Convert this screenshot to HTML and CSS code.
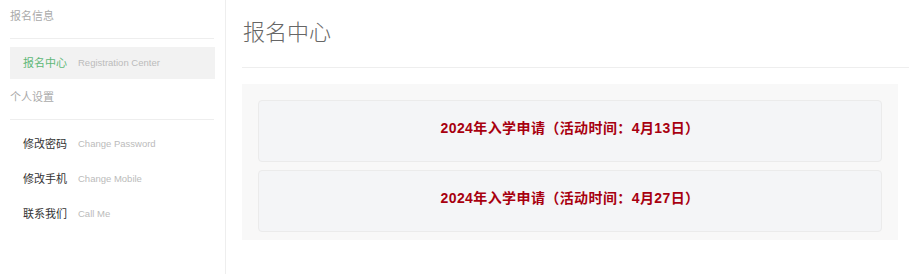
FILE: index.html
```html
<!DOCTYPE html>
<html lang="zh-CN">
<head>
<meta charset="utf-8">
<title>报名中心</title>
<link rel="stylesheet" href="styles.css">
</head>
<body>
<div class="layout">
  <aside class="sidebar">
    <div class="nav-head">报名信息</div>
    <ul class="nav-list">
      <li class="nav-item active"><span class="cn">报名中心</span><span class="en">Registration Center</span></li>
    </ul>
    <div class="nav-head second">个人设置</div>
    <ul class="nav-list">
      <li class="nav-item"><span class="cn">修改密码</span><span class="en">Change Password</span></li>
      <li class="nav-item"><span class="cn">修改手机</span><span class="en">Change Mobile</span></li>
      <li class="nav-item"><span class="cn">联系我们</span><span class="en">Call Me</span></li>
    </ul>
  </aside>
  <main class="main">
    <h1 class="page-title">报名中心</h1>
    <section class="panel">
      <div class="card">2024年入学申请（活动时间：4月13日）</div>
      <div class="card">2024年入学申请（活动时间：4月27日）</div>
    </section>
  </main>
</div>
</body>
</html>
```

FILE: styles.css
```css
* { box-sizing: border-box; }
html, body {
  margin: 0;
  padding: 0;
  background: #fff;
  font-family: "Liberation Sans", "Noto Sans CJK SC", sans-serif;
}
.layout {
  display: flex;
  min-height: 274px;
}
.sidebar {
  width: 226px;
  flex: none;
  padding: 0 10px;
  border-right: 1px solid #eeeeee;
}
.nav-head {
  font-size: 11px;
  color: #aaaaaa;
  line-height: 32px;
  padding-bottom: 6px;
  border-bottom: 1px solid #eeeeee;
  margin-right: 1px;
}
.nav-head.second {
  margin-top: 2px;
}
.nav-list {
  list-style: none;
  margin: 8px 0 0;
  padding: 0;
}
.nav-item {
  height: 32px;
  line-height: 32px;
  padding-left: 13px;
  margin-bottom: 3px;
  display: flex;
  align-items: center;
  gap: 11px;
}
.nav-list .nav-item:last-child { margin-bottom: 0; }
.nav-item .cn {
  font-size: 11px;
  color: #333333;
}
.nav-item .en {
  font-size: 9.5px;
  color: #bbbbbb;
}
.nav-item.active {
  background: #f2f2f2;
}
.nav-item.active .cn {
  color: #5fb878;
}
.main {
  flex: 1;
  padding-left: 16px;
}
.page-title {
  margin: 0;
  height: 68px;
  line-height: 66px;
  font-size: 22px;
  font-weight: 300;
  color: #666666;
  padding-left: 1px;
  border-bottom: 1px solid #eeeeee;
}
.panel {
  margin: 16px 11px 0 0;
  background: #f8f8f8;
  padding: 16px 16px 0;
  display: flex;
  flex-direction: column;
}
.card {
  height: 62px;
  margin-bottom: 8px;
  background: #f4f5f7;
  border: 1px solid #ebebeb;
  border-radius: 4px;
  text-align: center;
  line-height: 55px;
  font-size: 14px;
  font-weight: bold;
  color: #a8000f;
  text-spacing-trim: space-all;
  letter-spacing: 0.4px;
}
```
